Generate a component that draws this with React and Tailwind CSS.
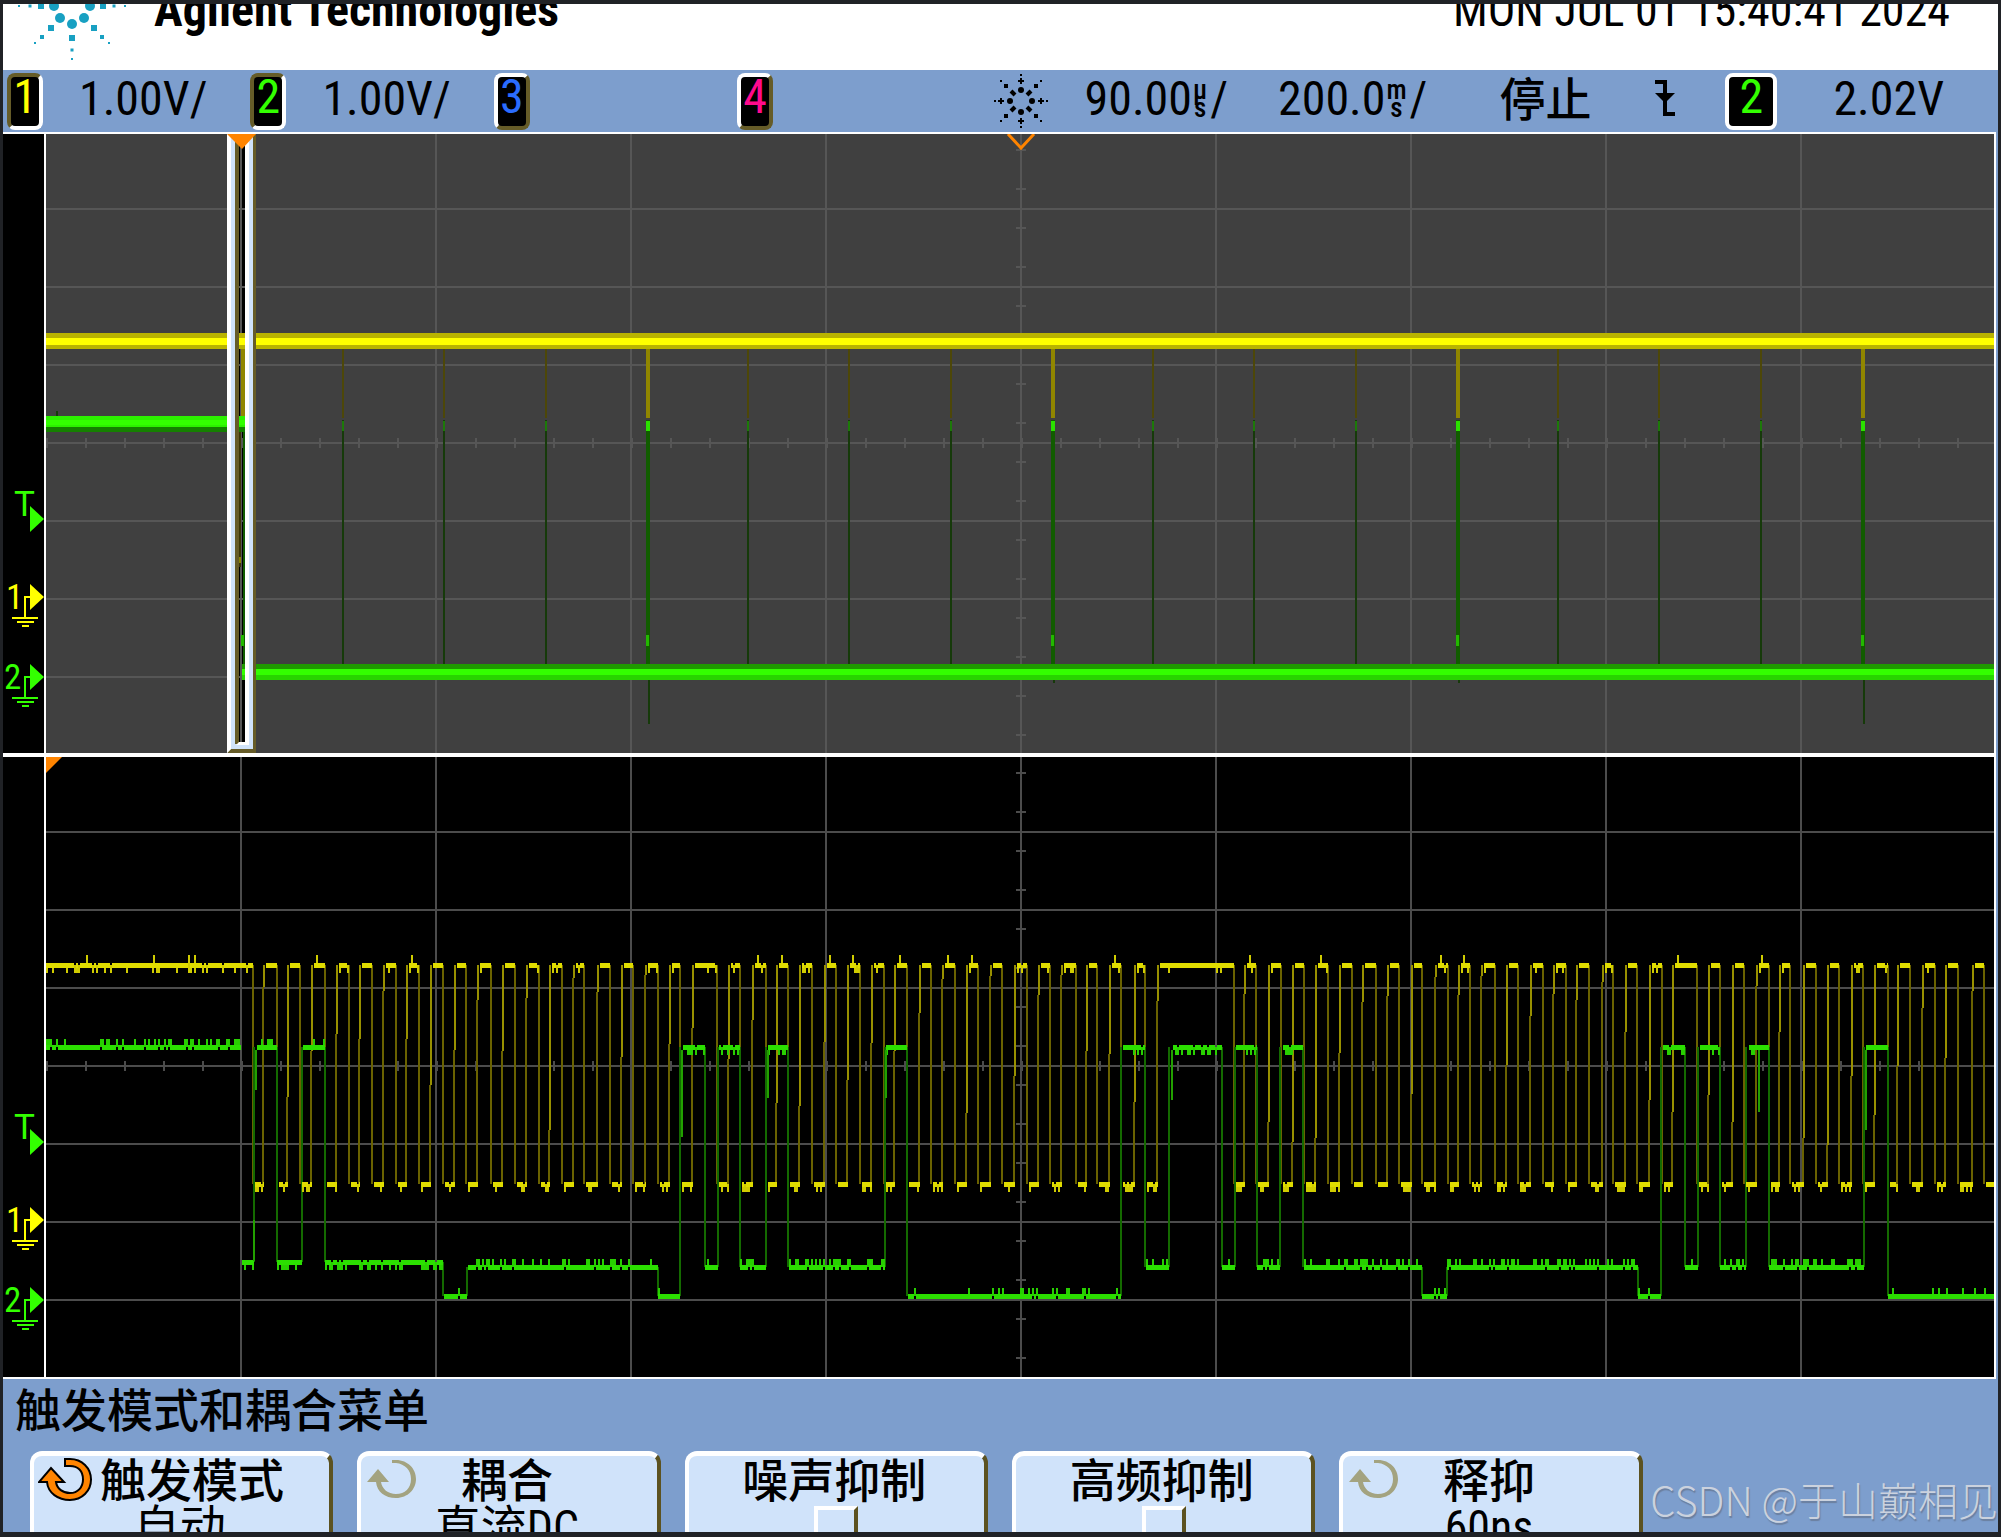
import React from 'react';

const GRID_X = [241, 436, 631, 826, 1216, 1411, 1606, 1801];
const CENTER_X = 1021;
const RIGHT = 1994;

// x positions where the clock (channel 1) changes level, first one is a fall
const CLOCK_EDGES = [
  253, 264, 277, 288, 300, 312, 325, 337, 349, 360, 372, 384, 396, 407, 419, 431, 443, 455, 466, 478, 491, 503, 515,
  527, 539, 550, 562, 574, 584, 598, 610, 622, 633, 646, 658, 670, 680, 693, 717, 729, 740, 753, 766, 777, 788, 800,
  812, 825, 836, 848, 860, 872, 884, 895, 907, 920, 931, 943, 955, 967, 978, 991, 1002, 1015, 1027, 1039, 1050, 1062,
  1076, 1087, 1097, 1110, 1121, 1135, 1145, 1158, 1234, 1245, 1256, 1269, 1281, 1293, 1304, 1316, 1328, 1340, 1352,
  1363, 1376, 1388, 1399, 1412, 1422, 1436, 1448, 1459, 1470, 1482, 1495, 1507, 1518, 1531, 1543, 1554, 1566, 1577,
  1589, 1603, 1613, 1626, 1637, 1650, 1662, 1673, 1697, 1709, 1720, 1733, 1744, 1757, 1769, 1780, 1790, 1804, 1816,
  1828, 1839, 1852, 1863, 1875, 1888, 1898, 1910, 1923, 1935, 1946, 1958, 1973, 1984,
];

// [start, end, level] of the data line (channel 2)
const DATA_SEGMENTS = [
  [46, 241, 'high'], [242, 254, 'midUp'], [257, 277, 'high'], [277, 302, 'midUp'], [303, 325, 'high'],
  [325, 443, 'midUp'], [444, 467, 'low'], [468, 658, 'mid'], [658, 680, 'low'], [683, 705, 'high'],
  [705, 718, 'mid'], [719, 740, 'high'], [740, 766, 'mid'], [768, 788, 'high'], [789, 885, 'mid'],
  [886, 907, 'high'], [908, 1121, 'low'], [1123, 1145, 'high'], [1146, 1169, 'mid'], [1173, 1222, 'high'],
  [1222, 1235, 'mid'], [1236, 1257, 'high'], [1257, 1280, 'mid'], [1283, 1303, 'high'], [1304, 1422, 'mid'],
  [1422, 1447, 'low'], [1447, 1638, 'mid'], [1638, 1661, 'low'], [1663, 1685, 'high'], [1685, 1698, 'mid'],
  [1700, 1720, 'high'], [1720, 1746, 'mid'], [1749, 1769, 'high'], [1769, 1864, 'mid'], [1866, 1888, 'high'],
  [1888, RIGHT, 'low'],
];

const DATA_LEVEL = { high: 1047, midUp: 1262, mid: 1267, low: 1296 };
const CLOCK_HIGH = 965;
const CLOCK_LOW = 1184;

const createRandom = (seed) => {
  let s = seed;
  return () => {
    s = (s * 16807) % 2147483647;
    return s / 2147483647;
  };
};

// A flat piece of a trace with small spikes on one side of it
const noisyFlat = (x1, x2, y, dir, density, random) => {
  let flat = '';
  let spikes = '';
  let from = x1;
  for (let x = x1; x < x2 - 1; x += 2) {
    const r = random();
    if (r < density) {
      spikes += `M${x + 1} ${y}v${dir * 8}`;
      if (r < density * 0.4 && x > from) {
        flat += `M${from} ${y}H${x}`;
        from = x + 2;
      }
    }
  }
  flat += `M${from} ${y}H${x2}`;
  return { flat, spikes };
};

const buildClock = () => {
  const random = createRandom(20240);
  let flats = '';
  let spikes = '';
  let edges = '';
  let bends = '';
  let start = 46;
  let high = true;
  [...CLOCK_EDGES, RIGHT].forEach((x) => {
    const y = high ? CLOCK_HIGH : CLOCK_LOW;
    const lead = start === 46 ? 0 : 2;
    const piece = noisyFlat(start + lead, x, y, 1, high ? 0.16 : 0.42, random);
    flats += piece.flat;
    spikes += piece.spikes;
    if (high && random() < 0.2) spikes += `M${start + 5} ${y}v-10`;
    if (x < RIGHT) {
      if (high) {
        edges += `M${x} ${CLOCK_HIGH}V${CLOCK_LOW}`;
      } else {
        const r = random();
        const bend = Math.round(CLOCK_HIGH + 10 + r * r * 170);
        edges += `M${x - 1} ${CLOCK_LOW}V${bend}`;
        bends += `M${x} ${bend}V${CLOCK_HIGH}`;
      }
    }
    start = x;
    high = !high;
  });
  spikes += 'M87 965v-10M154 965v-10M189 965v-10M195 965v-10';
  return { flats, spikes, edges, bends };
};

const buildData = () => {
  const random = createRandom(777);
  let flats = '';
  let spikes = '';
  let edges = '';
  DATA_SEGMENTS.forEach(([x1, x2, level], i) => {
    const y = DATA_LEVEL[level];
    const down = level === 'midUp' || (level === 'high' && i > 5);
    const density = level === 'low' ? 0.14 : 0.34;
    const piece = noisyFlat(x1, x2, y, down ? 1 : -1, density, random);
    flats += piece.flat;
    spikes += piece.spikes;
    const next = DATA_SEGMENTS[i + 1];
    if (next && i > 0) edges += `M${x2} ${y}V${DATA_LEVEL[next[2]]}`;
  });
  return { flats, spikes, edges };
};

const clock = buildClock();
const data = buildData();

const PULSES = Array.from({ length: 16 }, (_, i) => ({
  x: Math.round(343 + i * 101.25),
  strong: i % 4 === 3,
  tail: i === 3 || i === 15 ? 724 : 683,
}));

const Graticule = ({ top, bottom, color }) => {
  const rows = [1, 2, 3, 4, 5, 6, 7].map((n) => top + n * 78 - 3);
  const middle = rows[3];
  const ticksX = Array.from({ length: 50 }, (_, i) => 47 + i * 39);
  const ticksY = Array.from({ length: 16 }, (_, i) => top + 16 + i * 39);
  return (
    <g stroke={color} strokeWidth="2" shapeRendering="crispEdges">
      {rows.map((y) => <path key={y} d={`M46 ${y}H${RIGHT}`} />)}
      {GRID_X.map((x) => <path key={x} d={`M${x} ${top}V${bottom}`} />)}
      <path d={`M${CENTER_X} ${top}V${bottom}`} />
      {ticksX.map((x) => <path key={x} d={`M${x} ${middle - 5}v10`} />)}
      {ticksY.map((y) => <path key={y} d={`M${CENTER_X - 5} ${y}h10`} />)}
    </g>
  );
};

const LevelMarkers = ({ shift }) => (
  <g transform={`translate(0 ${shift})`} fontFamily="'Roboto Condensed', Roboto, sans-serif" fontSize="35">
    <text x="14" y="516" fill="#33ff00" fontFamily="Roboto, sans-serif">T</text>
    <path d="M30 506l14 13l-14 13z" fill="#33ff00" />
    <text x="6" y="609" fill="#ffff00">1</text>
    <path d="M30 584l14 13l-14 13z" fill="#ffff00" />
    <path d="M30 597H25V618M12 618h26M17 622h17M22 626h7" fill="none" stroke="#ffff00" strokeWidth="2" />
    <text x="4" y="689" fill="#33ff00">2</text>
    <path d="M30 664l14 13l-14 13z" fill="#33ff00" />
    <path d="M30 677H25V698M12 698h26M17 702h17M22 706h7" fill="none" stroke="#33ff00" strokeWidth="2" />
  </g>
);

const OverviewPane = () => (
  <svg viewBox="3 132 1993 623" className="block h-auto w-full" role="img" aria-label="Overview waveform">
    <rect x="3" y="132" width="1993" height="623" fill="#000" />
    <rect x="46" y="134" width="1949" height="621" fill="#404040" />
    <rect x="239" y="134" width="6" height="610" fill="#000" />
    <Graticule top={134} bottom={753} color="#565656" />
    <g shapeRendering="crispEdges">
      {PULSES.map(({ x, strong, tail }) => (
        <g key={x}>
          <rect x={x - 1} y="348" width={strong ? 4 : 2} height="70" fill={strong ? '#908600' : '#4d4708'} />
          <rect x={x - 1} y="420" width={strong ? 4 : 2} height="244" fill={strong ? '#115c00' : '#163a0a'} />
          <rect x={x - 1} y="421" width={strong ? 4 : 2} height="10" fill={strong ? '#2be000' : '#1c7a08'} />
          {strong && <rect x={x - 1} y="635" width="3" height="11" fill="#22b800" />}
          {strong && <rect x={x + 1} y="679" width="2" height={tail - 679} fill="#163a0a" />}
        </g>
      ))}
      <rect x="46" y="333" width="1949" height="16" fill="#b9b300" />
      <rect x="46" y="338" width="1949" height="7" fill="#ffff00" />
      <rect x="56" y="411" width="2" height="6" fill="#163a0a" />
      <rect x="46" y="416" width="199" height="16" fill="#158000" />
      <rect x="46" y="416" width="199" height="11" fill="#2cf000" />
      <rect x="46" y="420" width="199" height="5" fill="#33ff00" />
      <rect x="242" y="664" width="1753" height="16" fill="#1f9a00" />
      <rect x="242" y="669" width="1753" height="11" fill="#28d400" />
      <rect x="242" y="669" width="1753" height="6" fill="#33ff00" />
      <rect x="241" y="349" width="4" height="67" fill="#908600" />
      <rect x="239" y="432" width="2" height="135" fill="#3c3606" />
      <rect x="239" y="557" width="2" height="6" fill="#8a8200" />
      <rect x="243" y="432" width="2" height="232" fill="#115c00" />
      <rect x="241" y="635" width="3" height="11" fill="#22b800" />
    </g>
    {/* zoom window */}
    <path d="M227 134H239V742H245V134H256V753H227z" fill="#665c28" />
    <path d="M227 134H235V744H245V134H253V749H231L227 753z" fill="#d0e3fa" />
    <path d="M227 134H231V749L227 753zM245 134H249V745H236L239 742H245z" fill="#fff" />
    <path d="M227 134H256L242 149z" fill="#ff8400" />
    <path d="M1008 134L1021 148L1034 134" fill="none" stroke="#ff8400" strokeWidth="3" />
    <path d="M45 134V755M1995 132V755" stroke="#fff" strokeWidth="2" />
    <path d="M3 133H1996" stroke="#fff" strokeWidth="2" />
    <rect x="3" y="753" width="1993" height="2" fill="#fff" />
    <LevelMarkers shift={0} />
  </svg>
);

const DetailPane = () => (
  <svg viewBox="3 755 1993 624" className="block h-auto w-full" role="img" aria-label="Zoomed waveform">
    <rect x="3" y="755" width="1993" height="624" fill="#000" />
    <Graticule top={757} bottom={1377} color="#4c4c4c" />
    <g fill="none" shapeRendering="crispEdges">
      <path d={clock.edges} stroke="#6a6200" strokeWidth="2" />
      <path d={clock.bends} stroke="#989000" strokeWidth="2" />
      <path d={data.edges} stroke="#146a00" strokeWidth="2" />
      <path d={clock.spikes} stroke="#d0cc00" strokeWidth="2" />
      <path d={clock.flats} stroke="#e0dc00" strokeWidth="5" />
      <path d={data.spikes} stroke="#28d000" strokeWidth="2" />
      <path d={data.flats} stroke="#2bdf00" strokeWidth="5" />
      <path d="M256 1090V1050M254 1261V1220M682 1137V1050M768 1098V1050M886 1098V1050M1172 1100V1050M1759 1112V1050M1866 1130V1050" stroke="#22a000" strokeWidth="2" />
    </g>
    <path d="M46 757H62L46 773z" fill="#ff8400" />
    <path d="M45 757V1377M1995 757V1379" stroke="#fff" strokeWidth="2" />
    <path d="M3 756H1996M3 1378H1996" stroke="#fff" strokeWidth="2" />
    <LevelMarkers shift={623} />
  </svg>
);

const LOGO_DOTS = [
  [72, 24, 5], [60, 18, 5], [84, 18, 5], [54, 6, 5], [90, 6, 5],
];
const LOGO_SQUARES = [
  [41, 6, 6], [103, 6, 6], [51, 28, 6], [94, 28, 6], [72, 38, 6], [42, 37, 4], [102, 37, 4],
  [30, 6, 3], [114, 6, 3], [19, 6, 2], [125, 6, 2], [35, 43, 2], [109, 43, 2], [72, 50, 3], [72, 59, 2],
];

const BurstLogo = () => (
  <svg viewBox="16 4 114 58" className="h-[58px] w-[114px] shrink-0" fill="#18a0c2" aria-hidden="true">
    {LOGO_DOTS.map(([x, y, r]) => <circle key={`${x}-${y}`} cx={x} cy={y} r={r} />)}
    {LOGO_SQUARES.map(([x, y, s]) => <rect key={`${x}-${y}`} x={x - s / 2} y={y - s / 2} width={s} height={s} />)}
  </svg>
);

const BrightnessIcon = () => (
  <svg viewBox="-28 -28 56 56" className="size-14 shrink-0" aria-hidden="true">
    {[0, 90, 180, 270].map((a) => (
      <g key={a} transform={`rotate(${a})`}>
        <circle cx="0" cy="-11" r="3" />
        <path d="M-1 -23h2v2h2v2h-2v2h-2v-2h-2v-2h2zM-1 -27h2v2h-2z" />
        <path d="M6 -6L10 -10" stroke="#000" strokeWidth="4" />
        <path d="M13 -17h4v4h-4zM19 -21h2v2h-2z" />
      </g>
    ))}
  </svg>
);

const FallingEdgeIcon = () => (
  <svg viewBox="0 0 20 36" className="h-9 w-5 shrink-0" aria-hidden="true">
    <path d="M0 2H10V34H20" fill="none" stroke="#000" strokeWidth="4" />
    <path d="M0 13H20L10 23z" />
  </svg>
);

const KnobIcon = ({ active }) => (
  <svg viewBox="0 0 54 44" className="h-11 w-[54px] shrink-0" aria-hidden="true">
    {active ? (
      <path
        d="M27 1H32C44 1 53 10 53 21.500S44 42 32 42C20 42 10 35 9 24H1L13 10L26 24H18C19 31 25 35 32 35C40 35 45 29 45 21.500C45 13 40 8 32 8H27z"
        fill="#ff8400"
        stroke="#000"
        strokeWidth="2"
      />
    ) : (
      <path d="M27 2H31C43 2 51 11 51 21S43 40 31 40C20 40 12 34 11 24H2L13 11L24 24H16C17 31 23 36 31 36C40 36 46 30 46 21C46 12 40 6 31 5H27z" fill="#a3a380" />
    )}
  </svg>
);

const channels = [
  { id: '1', scale: '1.00V/', color: 'text-[#ffff00]', on: true },
  { id: '2', scale: '1.00V/', color: 'text-[#33ff00]', on: true },
  { id: '3', color: 'text-[#2a6cff]', on: false },
  { id: '4', color: 'text-[#ff0a8c]', on: false },
];

const ChannelButton = ({ id, color, on }) => (
  <button
    type="button"
    className={`flex h-[57px] w-9 shrink-0 items-center justify-center rounded-lg border-4 bg-black pb-2 leading-none ${color} ${
      on ? 'border-t-[#665c28] border-r-white border-b-white border-l-[#665c28]' : 'border-t-white border-r-[#665c28] border-b-[#665c28] border-l-white'
    }`}
  >
    {id}
  </button>
);

const TimeValue = ({ value, prefix, className }) => (
  <span className={`flex items-center pb-1 ${className}`}>
    {value}
    <span className="mx-px flex flex-col items-center text-[27px] leading-[18px] font-medium">
      <span>{prefix}</span>
      <span>s</span>
    </span>
    <span className="pl-0.5">/</span>
  </span>
);

const softkeys = [
  { label: '触发模式', value: '自动', knob: 'active' },
  { label: '耦合', value: '直流DC', knob: 'idle' },
  { label: '噪声抑制', checkbox: true },
  { label: '高频抑制', checkbox: true },
  { label: '释抑', value: '60ns', knob: 'idle' },
];

const keyClass =
  'flex h-24 flex-col items-stretch rounded-t-xl border-t-5 border-r-4 border-l-4 border-t-white border-r-[#5c5220] border-l-white bg-[#d0e3fa]';

const Softkey = ({ label, value, knob, checkbox }) => {
  if (checkbox) {
    return (
      <label className={keyClass}>
        <span className="block h-12 pt-0.5 pr-1 text-center leading-[46px]">{label}</span>
        <input
          type="checkbox"
          className="mt-0.5 size-11 shrink-0 appearance-none self-center border-4 border-t-white border-r-[#5c5220] border-b-[#5c5220] border-l-white"
        />
      </label>
    );
  }
  return (
    <button type="button" className={keyClass}>
      <span className="flex h-12 items-center pl-1">
        <KnobIcon active={knob === 'active'} />
        <span className={knob === 'active' ? 'flex-1 pt-0.5 pl-2 text-left leading-[46px]' : 'flex-1 pt-0.5 pr-[62px] text-center leading-[46px]'}>
          {label}
        </span>
      </span>
      <span className="block pr-1 text-center leading-[46px] font-normal">{value}</span>
    </button>
  );
};

export default function App() {
  return (
    <div className="flex min-h-screen flex-col bg-[#202226] px-[3px] pt-1 pb-[5px] font-['Roboto_Condensed','Noto_Sans_CJK_SC',sans-serif] text-black">
      <header className="flex h-[66px] items-start gap-6 overflow-hidden bg-white pr-12 pl-[13px]">
        <BurstLogo />
        <div className="-mt-[18px] flex flex-1 items-baseline justify-between leading-none">
          <h1 className="text-[48px] font-bold">Agilent Technologies</h1>
          <time className="text-[46px]">MON JUL 01 15:40:41 2024</time>
        </div>
      </header>

      <div className="flex h-[62px] items-center bg-[#7d9ecd] text-[48px] leading-none">
        <div className="grid w-[49%] grid-cols-4 pl-1">
          {channels.map((ch) => (
            <div key={ch.id} className="flex items-center gap-9">
              <ChannelButton {...ch} />
              {ch.scale && <span className="pb-1">{ch.scale}</span>}
            </div>
          ))}
        </div>
        <div className="flex flex-1 items-center pl-3">
          <BrightnessIcon />
          <TimeValue value="90.00" prefix="µ" className="ml-9" />
          <TimeValue value="200.0" prefix="m" className="ml-[50px]" />
          <span className="ml-[72px] pb-0.5 text-[46px] font-medium">停止</span>
          <span className="ml-16 pb-1.5"><FallingEdgeIcon /></span>
          <button type="button" className="ml-[50px] flex h-[57px] w-[52px] shrink-0 items-center justify-center rounded-lg border-4 border-white bg-black pb-2 text-[#33ff00]">
            2
          </button>
          <span className="ml-14 pb-1">2.02V</span>
        </div>
      </div>

      <main className="bg-[#7d9ecd] pr-0.5">
        <OverviewPane />
        <DetailPane />
      </main>

      <footer className="relative h-[153px] overflow-hidden bg-[#7d9ecd] text-[46px] font-medium">
        <h2 className="h-[72px] pt-2 pl-3 leading-[48px]">触发模式和耦合菜单</h2>
        <div className="grid grid-cols-6 gap-6 pr-7 pl-[27px]">
          {softkeys.map((key) => (
            <Softkey key={key.label} {...key} />
          ))}
        </div>
        <span className="absolute right-0 bottom-1.5 font-['Noto_Sans_CJK_SC',sans-serif] text-[40px] leading-[54px] font-light text-[#cbd2de] [text-shadow:1px_2px_1px_#6b7f9f]">
          CSDN @于山巅相见
        </span>
      </footer>
    </div>
  );
}
